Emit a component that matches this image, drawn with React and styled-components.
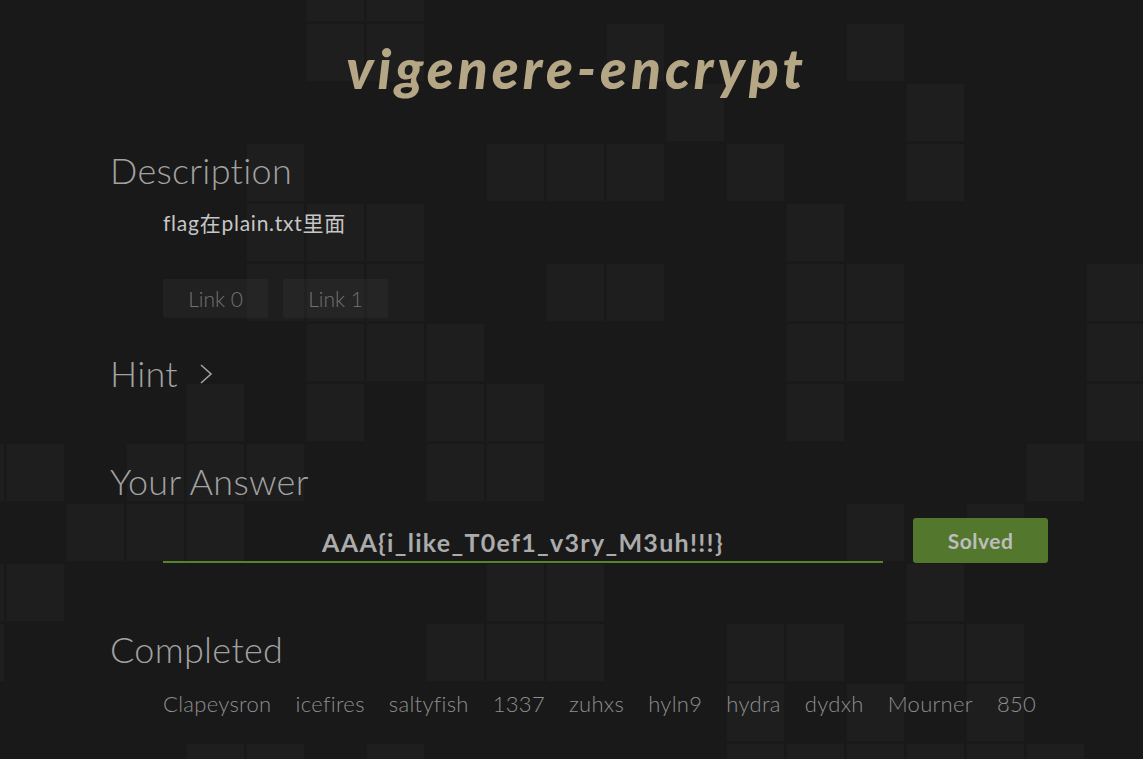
import React from "react";
import styled, { createGlobalStyle } from "styled-components";

const Global = createGlobalStyle`
  html, body { margin: 0; padding: 0; background: #191919; }
  body { font-family: Lato, "Noto Sans CJK SC", sans-serif; overflow: hidden; }
  * { box-sizing: border-box; }
`;

const SQUARES = {
  "-36": [307, 367],
  24: [307, 367, 607, 847],
  84: [667, 907],
  144: [247, 487, 547, 607, 727, 907],
  204: [247, 307, 367, 787],
  264: [247, 307, 367, 547, 607, 787, 847, 1087],
  324: [307, 367, 427, 787, 847, 1087],
  384: [187, 307, 427, 487, 787, 1087],
  444: [-53, 7, 127, 187, 247, 427, 487, 1027],
  504: [67, 127, 187, 847, 967],
  564: [-53, 7, 487, 547, 907],
  624: [-53, 427, 487, 547, 727, 787, 907, 967],
  684: [727, 847, 967],
  744: [187, 247, 367, 727, 787, 847, 907, 967, 1027],
};

const NAMES = ["Clapeysron", "icefires", "saltyfish", "1337", "zuhxs", "hyln9", "hydra", "dydxh", "Mourner", "850"];

const Page = styled.div`
  position: relative;
  width: 1143px;
  height: 759px;
  overflow: hidden;
  background: #191919;
`;

const Backdrop = styled.svg`
  position: absolute;
  left: 0;
  top: 0;
  z-index: 0;
`;

const Layout = styled.div`
  position: relative;
  z-index: 1;
  padding-top: 37px;
`;

const Title = styled.h1`
  margin: 0 0 0 10px;
  text-align: center;
  font-family: Lato, sans-serif;
  font-style: italic;
  font-weight: 900;
  font-size: 55px;
  line-height: 62px;
  letter-spacing: 4px;
  color: #b5a685;
`;

const Body = styled.div`
  padding-left: 110px;
  display: flex;
  flex-direction: column;
`;

const Section = styled.section`
  margin-top: ${(p) => p.$top}px;
  display: flex;
  flex-direction: column;
`;

const Heading = styled.h2`
  margin: 0;
  display: flex;
  align-items: center;
  gap: 21px;
  font-family: Lato, sans-serif;
  font-weight: 300;
  font-size: 36px;
  line-height: 44px;
  letter-spacing: 0.3px;
  color: #a2a2a2;
`;

const Chevron = styled.svg`
  display: block;
  margin-top: 2px;
`;

const Indent = styled.div`
  padding-left: 53px;
  margin-top: ${(p) => p.$top}px;
`;

const DescText = styled.p`
  margin: 0;
  font-family: Lato, "Noto Sans CJK SC", sans-serif;
  font-weight: 400;
  font-size: 21px;
  line-height: 28px;
  letter-spacing: 0.75px;
  color: #c6c6c6;
`;

const LinkRow = styled.div`
  display: flex;
  gap: 15px;
`;

const LinkButton = styled.a`
  display: flex;
  align-items: center;
  justify-content: center;
  width: 105px;
  height: 39px;
  border-radius: 2px;
  background: rgba(255, 255, 255, 0.035);
  font-family: Lato, sans-serif;
  font-weight: 300;
  font-size: 21px;
  color: #727272;
  text-decoration: none;
`;

const AnswerRow = styled.div`
  display: flex;
  align-items: flex-end;
  gap: 30px;
`;

const AnswerField = styled.input`
  width: 720px;
  height: 45px;
  padding: 4px 0 0;
  border: none;
  border-bottom: 2px solid #568428;
  background: transparent;
  outline: none;
  text-align: center;
  font-family: Lato, sans-serif;
  font-weight: 700;
  font-size: 25px;
  letter-spacing: 1.3px;
  color: #ababab;
`;

const SolvedButton = styled.button`
  width: 135px;
  height: 45px;
  border: none;
  border-radius: 3px;
  background: rgba(86, 124, 46, 0.95);
  font-family: Lato, sans-serif;
  font-weight: 700;
  font-size: 21px;
  letter-spacing: 0.5px;
  color: #bdbdbd;
  padding: 0;
`;

const NameList = styled.ul`
  list-style: none;
  margin: 0;
  padding: 0;
  display: flex;
  gap: 24px;
`;

const Name = styled.li`
  font-family: Lato, sans-serif;
  font-weight: 300;
  font-size: 22px;
  line-height: 26px;
  letter-spacing: 0.3px;
  color: #8e8e8e;
`;

export default function App() {
  const rects = [];
  Object.entries(SQUARES).forEach(([y, xs]) =>
    xs.forEach((x) => rects.push(<rect key={`${x}-${y}`} x={x} y={Number(y)} width="57" height="57" fill="#1e1e1e" />))
  );
  return (
    <Page>
      <Global />
      <Backdrop width="1143" height="759" viewBox="0 0 1143 759">
        {rects}
      </Backdrop>
      <Layout>
        <Title>vigenere-encrypt</Title>
        <Body>
          <Section $top={49}>
            <Heading>Description</Heading>
            <Indent $top={17}>
              <DescText>flag在plain.txt里面</DescText>
            </Indent>
            <Indent $top={42}>
              <LinkRow>
                <LinkButton href="#">Link 0</LinkButton>
                <LinkButton href="#">Link 1</LinkButton>
              </LinkRow>
            </Indent>
          </Section>
          <Section $top={33}>
            <Heading>
              Hint
              <Chevron width="14" height="24" viewBox="0 0 14 24">
                <polyline points="2,3 12,12 2,21" fill="none" stroke="#a2a2a2" strokeWidth="1.6" />
              </Chevron>
            </Heading>
          </Section>
          <Section $top={64}>
            <Heading>Your Answer</Heading>
            <Indent $top={15}>
              <AnswerRow>
                <AnswerField readOnly value="AAA{i_like_T0ef1_v3ry_M3uh!!!}" />
                <SolvedButton>Solved</SolvedButton>
              </AnswerRow>
            </Indent>
          </Section>
          <Section $top={64}>
            <Heading>Completed</Heading>
            <Indent $top={20}>
              <NameList>
                {NAMES.map((n) => (
                  <Name key={n}>{n}</Name>
                ))}
              </NameList>
            </Indent>
          </Section>
        </Body>
      </Layout>
    </Page>
  );
}
